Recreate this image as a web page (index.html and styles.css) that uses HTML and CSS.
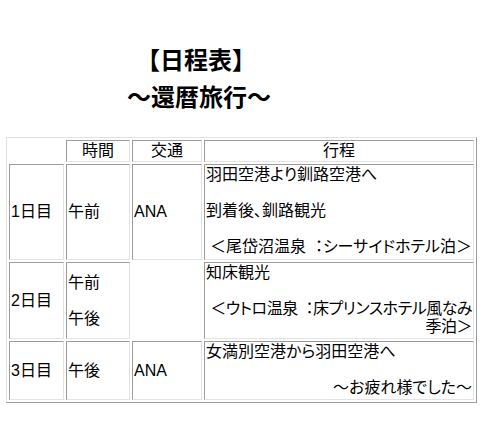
FILE: index.html
```html
<!DOCTYPE html>
<html lang="ja">
<head>
<meta charset="utf-8">
<title>日程表</title>
<link rel="stylesheet" href="styles.css">
</head>
<body>
<div class="page">
  <h1 class="title">
    <span class="t1">【日程表】</span>
    <span class="t2">～還暦旅行～</span>
  </h1>
  <table class="sched">
    <tr class="head">
      <td class="c1"></td>
      <td class="c2 center">時間</td>
      <td class="c3 center">交通</td>
      <td class="c4 center">行程</td>
    </tr>
    <tr class="r1">
      <td>1日目</td>
      <td>午前</td>
      <td>ANA</td>
      <td class="plan">羽田空港より釧路空港へ<br><br>到着後、釧路観光<br><br><div class="right">＜尾岱沼温泉&nbsp; ：シーサイドホテル泊＞</div></td>
    </tr>
    <tr class="r2">
      <td>2日目</td>
      <td>午前<br><br>午後</td>
      <td></td>
      <td class="plan">知床観光<br><br><div class="right tight">＜ウトロ温泉&nbsp; ：床プリンスホテル風なみ<br>季泊＞</div></td>
    </tr>
    <tr class="r3">
      <td>3日目</td>
      <td>午後</td>
      <td>ANA</td>
      <td class="plan">女満別空港から羽田空港へ<br><br><div class="right">～お疲れ様でした～</div></td>
    </tr>
  </table>
</div>
</body>
</html>
```
FILE: styles.css
```css
html, body {
  margin: 0;
  padding: 0;
  background: #ffffff;
}

body {
  font-family: "Liberation Sans", "Noto Sans CJK JP", sans-serif;
  color: #000000;
}

.page {
  padding: 40px 0 0 6px;
}

.title {
  margin: 0 0 23px 0;
  font-family: "Noto Sans CJK JP", sans-serif;
  font-size: 24px;
  font-weight: bold;
  line-height: 37px;
}

.t1 {
  display: block;
  padding-left: 130px;
}

.t2 {
  display: block;
  padding-left: 121px;
}

.sched {
  border-collapse: separate;
  border-spacing: 2px;
  border: 1px solid;
  border-color: #e3e3e3 #9c9c9c #9c9c9c #e3e3e3;
  width: 471px;
  table-layout: fixed;
  empty-cells: hide;
}

.sched td {
  box-sizing: border-box;
  border: 1px solid;
  border-color: #9c9c9c #e3e3e3 #e3e3e3 #9c9c9c;
  padding: 1px;
  font-size: 16px;
  line-height: 18px;
  vertical-align: middle;
  font-feature-settings: "palt";
}

.sched .c1 { width: 55px; }
.sched .c2 { width: 64px; }
.sched .c3 { width: 70px; }
.sched .c4 { width: 270px; }

.sched .center { text-align: center; }

.sched .plan { vertical-align: top; }

.right { text-align: right; }

.tight {
  white-space: nowrap;
  letter-spacing: -0.5px;
}

.head { height: 22px; }
.r1 { height: 96px; }
.r2 { height: 77px; }
.r3 { height: 59px; }
```
